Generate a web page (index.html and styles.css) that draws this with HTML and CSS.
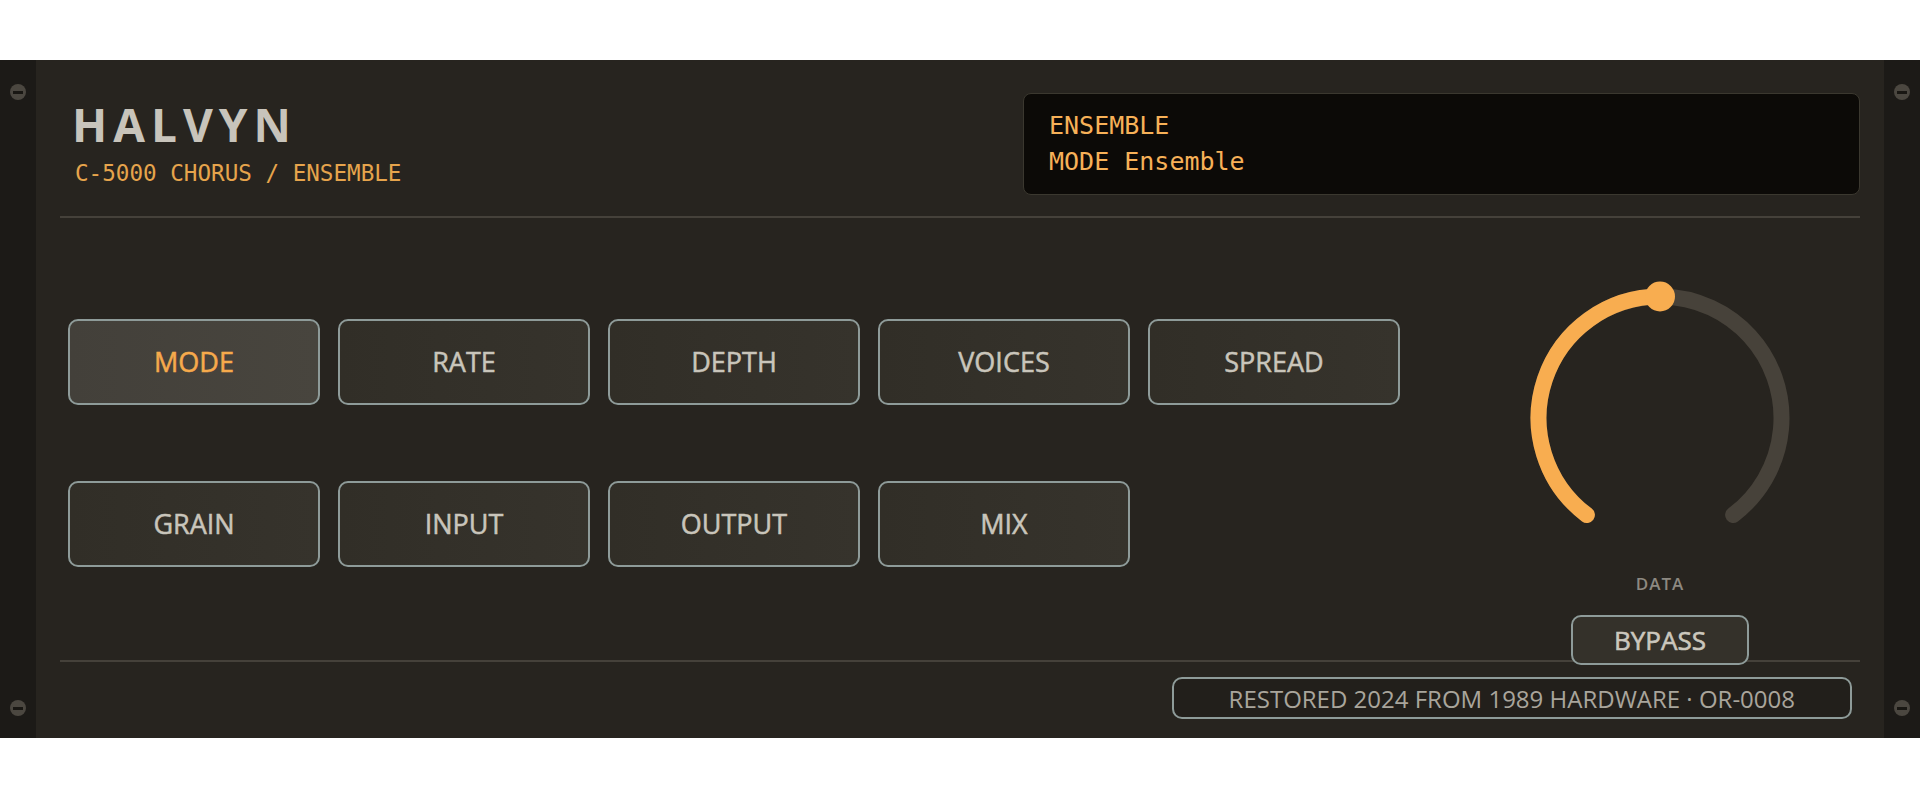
FILE: index.html
```html
<!DOCTYPE html>
<html lang="en">
<head>
    <meta charset="UTF-8">
    <meta name="viewport" content="width=device-width, initial-scale=1.0">
    <title>Halvyn C-5000</title>
    <link rel="stylesheet" href="styles.css">
</head>
<body>
    <div class="rack">
        <div class="rail">
            <span class="screw"></span>
            <span class="screw"></span>
        </div>

        <div class="panel">
            <header class="head">
                <div class="brand">
                    <h1 class="logo">HALVYN</h1>
                    <p class="model">C-5000 CHORUS / ENSEMBLE</p>
                </div>
                <div class="lcd">
                    <div class="lcd-line">ENSEMBLE</div>
                    <div class="lcd-line">MODE Ensemble</div>
                </div>
            </header>

            <main class="controls">
                <div class="pads">
                    <button class="pad active">MODE</button>
                    <button class="pad">RATE</button>
                    <button class="pad">DEPTH</button>
                    <button class="pad">VOICES</button>
                    <button class="pad">SPREAD</button>
                    <button class="pad">GRAIN</button>
                    <button class="pad">INPUT</button>
                    <button class="pad">OUTPUT</button>
                    <button class="pad">MIX</button>
                </div>

                <div class="knob-col">
                    <svg class="knob" width="280" height="280" viewBox="0 0 280 280">
                        <!-- track, 143deg each side of top -->
                        <path d="M 66.9 237 A 121.5 121.5 0 1 1 213.1 237" fill="none" stroke="#47423a" stroke-width="16" stroke-linecap="round"/>
                        <!-- value -->
                        <path d="M 66.9 237 A 121.5 121.5 0 0 1 140 18.5" fill="none" stroke="#f8ad50" stroke-width="16" stroke-linecap="round"/>
                        <circle cx="140" cy="18.5" r="15" fill="#f8ad50"/>
                    </svg>
                    <div class="knob-label">DATA</div>
                    <button class="bypass">BYPASS</button>
                </div>
            </main>

            <footer class="foot">
                <span class="badge">RESTORED 2024 FROM 1989 HARDWARE · OR-0008</span>
            </footer>
        </div>

        <div class="rail">
            <span class="screw"></span>
            <span class="screw"></span>
        </div>
    </div>
</body>
</html>
```

FILE: styles.css
```css
body {
    margin: 0;
    padding-top: 60px;
    background-color: #fff;
    font-family: "Open Sans", "Noto Sans", sans-serif;
}
.rack {
    display: flex;
    height: 678px;
    background-color: #27241f;
}
.rail {
    width: 36px;
    flex: none;
    background-color: #1c1a17;
    display: flex;
    flex-direction: column;
    justify-content: space-between;
    align-items: center;
    padding: 24px 0 22px;
    box-sizing: border-box;
}
.screw {
    width: 16px;
    height: 16px;
    border-radius: 50%;
    background-color: #4b4740;
    display: flex;
    justify-content: center;
    align-items: center;
}
.screw::after {
    content: "";
    width: 10px;
    height: 3px;
    background-color: #191713;
}
.panel {
    flex: 1;
    display: flex;
    flex-direction: column;
    padding: 0 24px;
}

/* header */
.head {
    height: 123px;
    flex: none;
    display: flex;
    justify-content: space-between;
    align-items: flex-start;
    padding-top: 33px;
    border-bottom: 2px solid #45413a;
}
.brand {
    padding: 8px 0 0 12px;
}
.logo {
    margin: 0;
    font-size: 46px;
    line-height: 46px;
    font-weight: 700;
    letter-spacing: 6px;
    color: #c8c4bb;
}
.model {
    margin: 15px 0 0 3px;
    font-family: "DejaVu Sans Mono", monospace;
    font-size: 22.6px;
    line-height: 22px;
    color: #e6a44c;
}
.lcd {
    width: 837px;
    height: 102px;
    box-sizing: border-box;
    padding: 14px 25px;
    background-color: #0c0a07;
    border: 1px solid #3b382f;
    border-radius: 8px;
}
.lcd-line {
    font-family: "DejaVu Sans Mono", monospace;
    font-size: 25px;
    line-height: 36px;
    color: #f7b158;
}

/* pads + knob */
.controls {
    flex: 1;
    min-height: 0;
    display: flex;
    align-items: center;
    padding: 7px 0 0 8px;
}
.pads {
    display: grid;
    grid-template-columns: repeat(5, 252px);
    grid-auto-rows: 86px;
    column-gap: 18px;
    row-gap: 76px;
}
.pad {
    box-sizing: border-box;
    border: 2px solid #8e9b99;
    border-radius: 10px;
    background: linear-gradient(90deg, #312e27, #36332c);
    color: #c9c5bb;
    font-family: "Open Sans", sans-serif;
    font-size: 27px;
    font-weight: 400;
    -webkit-text-stroke: 0.5px currentColor;
    padding: 0;
    cursor: pointer;
}
.pad.active {
    background: linear-gradient(90deg, #43403a, #48453e);
    color: #f6aa4c;
}
.knob-col {
    align-self: flex-start;
    margin-left: auto;
    width: 400px;
    padding-top: 53px;
    display: flex;
    flex-direction: column;
    align-items: center;
}
.knob {
    display: block;
}
.knob-label {
    margin-top: 16px;
    font-size: 17px;
    line-height: 20px;
    font-weight: 600;
    letter-spacing: 1px;
    color: #8d8981;
}
.bypass {
    position: relative;
    z-index: 1;
    margin-top: 21px;
    width: 178px;
    height: 50px;
    box-sizing: border-box;
    border: 2px solid #8e9b99;
    border-radius: 10px;
    background-color: #34312a;
    color: #cbc7bd;
    font-family: "Open Sans", sans-serif;
    font-size: 26px;
    font-weight: 400;
    -webkit-text-stroke: 0.6px currentColor;
    padding: 0;
}

/* footer */
.foot {
    height: 72px;
    flex: none;
    border-top: 2px solid #45413a;
    display: flex;
    justify-content: flex-end;
    align-items: center;
    padding-right: 8px;
    padding-bottom: 4px;
}
.badge {
    height: 42px;
    box-sizing: border-box;
    display: flex;
    align-items: center;
    padding: 0 55px;
    border: 2px solid #8e9b99;
    border-radius: 10px;
    background-color: #221f1b;
    font-size: 24px;
    color: #a9a59c;
}
```
